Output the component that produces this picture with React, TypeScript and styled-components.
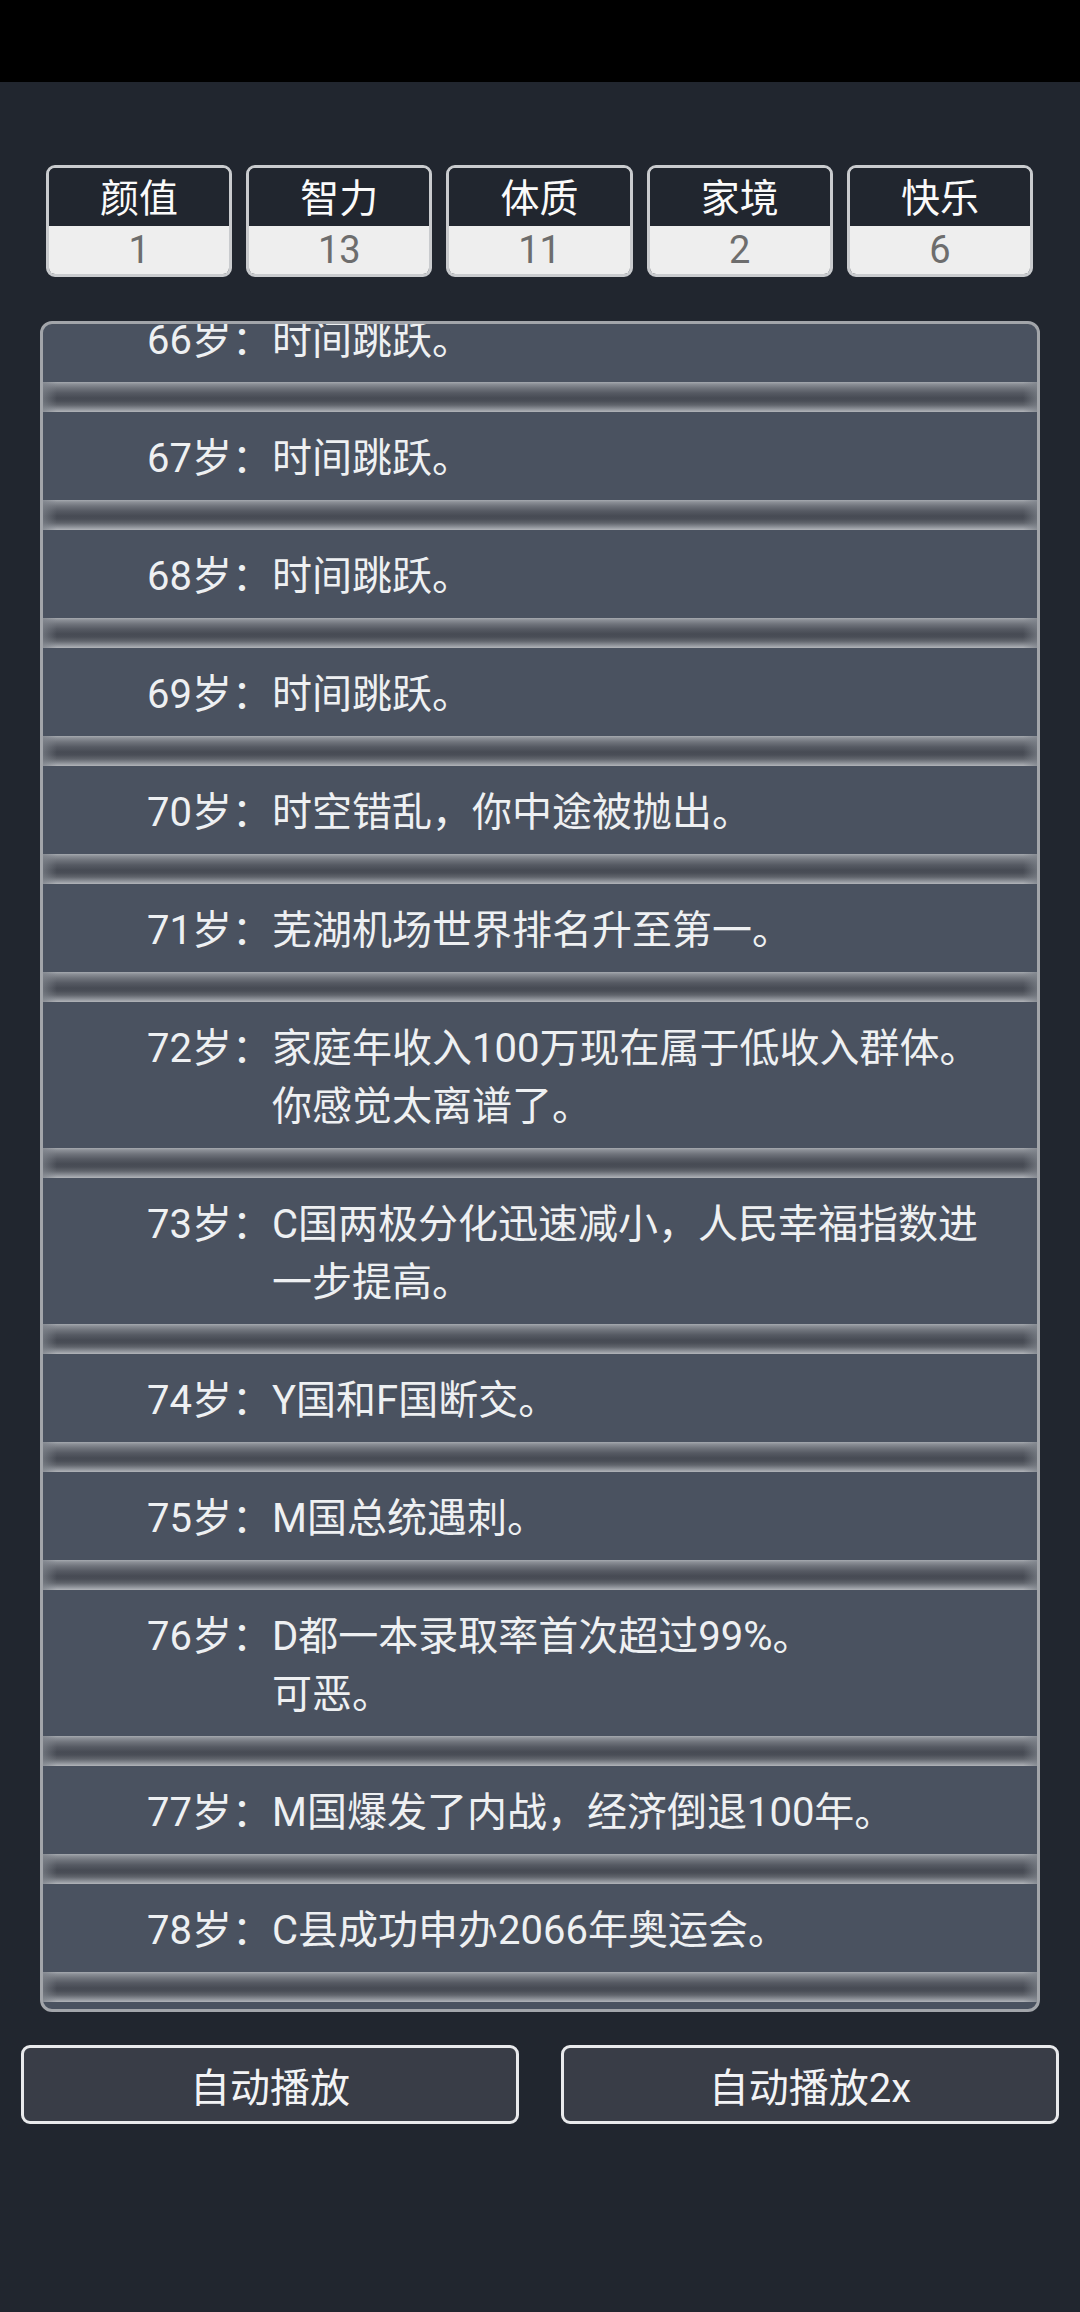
import React from 'react';
import styled, { createGlobalStyle } from 'styled-components';

const GlobalStyle = createGlobalStyle`
  html, body {
    margin: 0;
    padding: 0;
    background: #21262f;
  }
  body {
    font-family: Roboto, "Noto Sans CJK SC", sans-serif;
    width: 1080px;
    min-height: 2312px;
  }
`;

const Screen = styled.div`
  display: flex;
  flex-direction: column;
  width: 1080px;
  height: 2312px;
  background: #21262f;
`;

const StatusBar = styled.div`
  height: 82px;
  background: #000;
  flex-shrink: 0;
`;

const StatsRow = styled.div`
  display: flex;
  gap: 14px;
  padding: 0 47px 0 46px;
  margin-top: 83px;
`;

const StatBox = styled.div`
  flex: 1;
  display: flex;
  flex-direction: column;
  border: 3px solid #c9cbce;
  border-radius: 9px;
  overflow: hidden;
`;

const StatLabel = styled.div`
  height: 58px;
  box-sizing: border-box;
  padding-top: 3px;
  background: #21262f;
  color: #fafafa;
  font-size: 39px;
  line-height: 56px;
  text-align: center;
`;

const StatValue = styled.div`
  height: 48px;
  background: #eeeeee;
  color: #6d6d6d;
  font-size: 38px;
  line-height: 48px;
  text-align: center;
`;

const Panel = styled.div`
  margin: 44px 40px 0;
  height: 1691px;
  box-sizing: border-box;
  border: 3px solid #a2a5aa;
  border-radius: 12px;
  background: #4a5260;
  overflow: hidden;
`;

const List = styled.div`
  display: flex;
  flex-direction: column;
  margin-top: -30px;
`;

const Entry = styled.div`
  display: flex;
  padding: 18px 40px 12px 104px;
  color: #eef0f2;
  font-size: 40px;
  line-height: 58px;
`;

const Age = styled.span`
  flex-shrink: 0;
  width: 125px;
  white-space: nowrap;
`;

const Text = styled.span`
  flex: 1;
  white-space: pre-line;
`;

const Separator = styled.div`
  height: 30px;
  background:
    linear-gradient(to right,
      rgba(125, 130, 138, 0.7) 0,
      rgba(125, 130, 138, 0) 14px,
      rgba(125, 130, 138, 0) calc(100% - 14px),
      rgba(125, 130, 138, 0.7) 100%),
    linear-gradient(to bottom,
      #a6aab0 0px,
      #8c9097 2px,
      #70747c 6px,
      #565a63 11px,
      #474b54 16px,
      #4a4e57 19px,
      #60646c 23px,
      #8d9198 27px,
      #b2b5ba 30px);
`;

const Controls = styled.div`
  display: flex;
  gap: 42px;
  padding: 0 21px;
  margin-top: 33px;
`;

const PlayButton = styled.button`
  flex: 1;
  height: 79px;
  box-sizing: border-box;
  border: 3px solid #e9eaec;
  border-radius: 9px;
  background: #393d47;
  color: #f2f3f5;
  font-family: Roboto, "Noto Sans CJK SC", sans-serif;
  font-size: 40px;
  padding: 0;
`;

const stats = [
  { label: '颜值', value: 1 },
  { label: '智力', value: 13 },
  { label: '体质', value: 11 },
  { label: '家境', value: 2 },
  { label: '快乐', value: 6 },
];

const events = [
  { age: 66, text: '时间跳跃。' },
  { age: 67, text: '时间跳跃。' },
  { age: 68, text: '时间跳跃。' },
  { age: 69, text: '时间跳跃。' },
  { age: 70, text: '时空错乱，你中途被抛出。' },
  { age: 71, text: '芜湖机场世界排名升至第一。' },
  { age: 72, text: '家庭年收入100万现在属于低收入群体。\n你感觉太离谱了。' },
  { age: 73, text: 'C国两极分化迅速减小，人民幸福指数进一步提高。' },
  { age: 74, text: 'Y国和F国断交。' },
  { age: 75, text: 'M国总统遇刺。' },
  { age: 76, text: 'D都一本录取率首次超过99%。\n可恶。' },
  { age: 77, text: 'M国爆发了内战，经济倒退100年。' },
  { age: 78, text: 'C县成功申办2066年奥运会。' },
];

const App: React.FC = () => {
  return (
    <Screen>
      <GlobalStyle />
      <StatusBar />
      <StatsRow>
        {stats.map((s) => (
          <StatBox key={s.label}>
            <StatLabel>{s.label}</StatLabel>
            <StatValue>{s.value}</StatValue>
          </StatBox>
        ))}
      </StatsRow>

      <Panel>
        <List>
          {events.map((e) => (
            <React.Fragment key={e.age}>
              <Entry>
                <Age>{e.age}岁：</Age>
                <Text>{e.text}</Text>
              </Entry>
              <Separator />
            </React.Fragment>
          ))}
        </List>
      </Panel>

      <Controls>
        <PlayButton>自动播放</PlayButton>
        <PlayButton>自动播放2x</PlayButton>
      </Controls>
    </Screen>
  );
};

export default App;
